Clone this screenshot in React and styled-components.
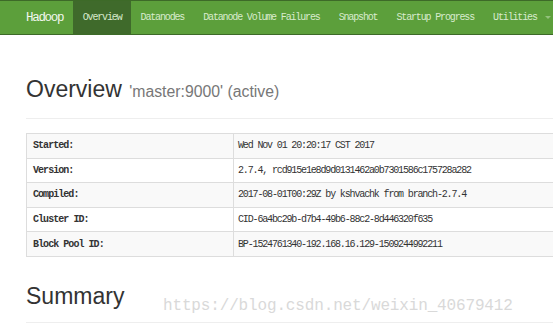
import React from "react";
import styled, { createGlobalStyle } from "styled-components";

const colors = {
  nav: "#5c9f3b",
  navBorder: "#3d6a28",
  navActive: "#3f6a2b",
  navText: "#d8ebcd",
  brand: "#f2f7ee",
  heading: "#333333",
  muted: "#777777",
  rule: "#eeeeee",
  cellBorder: "#dddddd",
  stripe: "#f9f9f9",
  cellText: "#333333",
  watermark: "#d9d9d9",
};

const mono = `"Liberation Mono", "DejaVu Sans Mono", monospace`;
const sans = `"Liberation Sans", Arial, sans-serif`;

const GlobalStyle = createGlobalStyle`
  html, body {
    margin: 0;
    padding: 0;
    overflow: hidden;
    background: #ffffff;
  }
`;

const Page = styled.div`
  position: relative;
  width: 553px;
  height: 325px;
  overflow: hidden;
`;

const Navbar = styled.nav`
  display: flex;
  align-items: stretch;
  height: 33px;
  width: 1200px;
  background: ${colors.nav};
  border-top: 1px solid ${colors.navBorder};
  border-bottom: 1px solid ${colors.navBorder};
`;

const Brand = styled.div`
  display: flex;
  align-items: center;
  margin-left: 26px;
  padding-right: 10px;
  font-family: ${mono};
  font-size: 12.5px;
  letter-spacing: -1.3px;
  color: ${colors.brand};
`;

const NavItem = styled.div`
  display: flex;
  align-items: center;
  padding: 0 9.5px;
  font-family: ${mono};
  font-size: 10px;
  letter-spacing: -1.15px;
  color: ${colors.navText};
  background: ${(props) => (props.active ? colors.navActive : "transparent")};
  white-space: nowrap;
`;

const Caret = styled.span`
  display: inline-block;
  margin-left: 8px;
  border-left: 3px solid transparent;
  border-right: 3px solid transparent;
  border-top: 3px solid ${colors.navText};
  opacity: 0.45;
`;

const Container = styled.main`
  width: 1140px;
  margin-left: 26px;
`;

const PageHeader = styled.div`
  margin: ${(props) => props.top}px 0 14px;
  padding-bottom: ${(props) => props.pad}px;
  border-bottom: 1px solid ${colors.rule};
`;

const Title = styled.h1`
  margin: 0;
  font-family: ${sans};
  font-size: 23px;
  line-height: 25px;
  font-weight: 400;
  color: ${colors.heading};
`;

const Sub = styled.small`
  margin-left: 1px;
  font-size: 15.8px;
  color: ${colors.muted};
`;

const Table = styled.table`
  width: 100%;
  border-collapse: collapse;
  border: 1px solid ${colors.cellBorder};
  font-family: ${mono};
  font-size: 10px;
  color: ${colors.cellText};

  tr:nth-child(odd) {
    background: ${colors.stripe};
  }
`;

const Th = styled.th`
  width: 194px;
  height: 23.6px;
  padding: 0 6px;
  text-align: left;
  font-weight: 700;
  letter-spacing: -0.95px;
  border: 1px solid ${colors.cellBorder};
`;

const Td = styled.td`
  height: 23.6px;
  padding: 0 4px;
  letter-spacing: -1.15px;
  border: 1px solid ${colors.cellBorder};
  white-space: nowrap;
`;

const Watermark = styled.div`
  position: absolute;
  left: 163px;
  top: 298px;
  font-family: ${mono};
  font-size: 16px;
  line-height: 16px;
  letter-spacing: -0.15px;
  color: ${colors.watermark};
  pointer-events: none;
  white-space: nowrap;
`;

const navItems = [
  "Overview",
  "Datanodes",
  "Datanode Volume Failures",
  "Snapshot",
  "Startup Progress",
];

const rows = [
  ["Started:", "Wed Nov 01 20:20:17 CST 2017"],
  ["Version:", "2.7.4, rcd915e1e8d9d0131462a0b7301586c175728a282"],
  ["Compiled:", "2017-08-01T00:29Z by kshvachk from branch-2.7.4"],
  ["Cluster ID:", "CID-6a4bc29b-d7b4-49b6-88c2-8d446320f635"],
  ["Block Pool ID:", "BP-1524761340-192.168.16.129-1509244992211"],
];

export default function App() {
  return (
    <Page>
      <GlobalStyle />
      <Navbar>
        <Brand>Hadoop</Brand>
        {navItems.map((item) => (
          <NavItem key={item} active={item === "Overview"}>
            {item}
          </NavItem>
        ))}
        <NavItem>
          Utilities
          <Caret />
        </NavItem>
      </Navbar>
      <Container>
        <PageHeader top={42} pad={14}>
          <Title>
            Overview <Sub>'master:9000' (active)</Sub>
          </Title>
        </PageHeader>
        <Table>
          <tbody>
            {rows.map(([label, value]) => (
              <tr key={label}>
                <Th>{label}</Th>
                <Td>{value}</Td>
              </tr>
            ))}
          </tbody>
        </Table>
        <PageHeader top={27} pad={13}>
          <Title>Summary</Title>
        </PageHeader>
      </Container>
      <Watermark>https://blog.csdn.net/weixin_40679412</Watermark>
    </Page>
  );
}
